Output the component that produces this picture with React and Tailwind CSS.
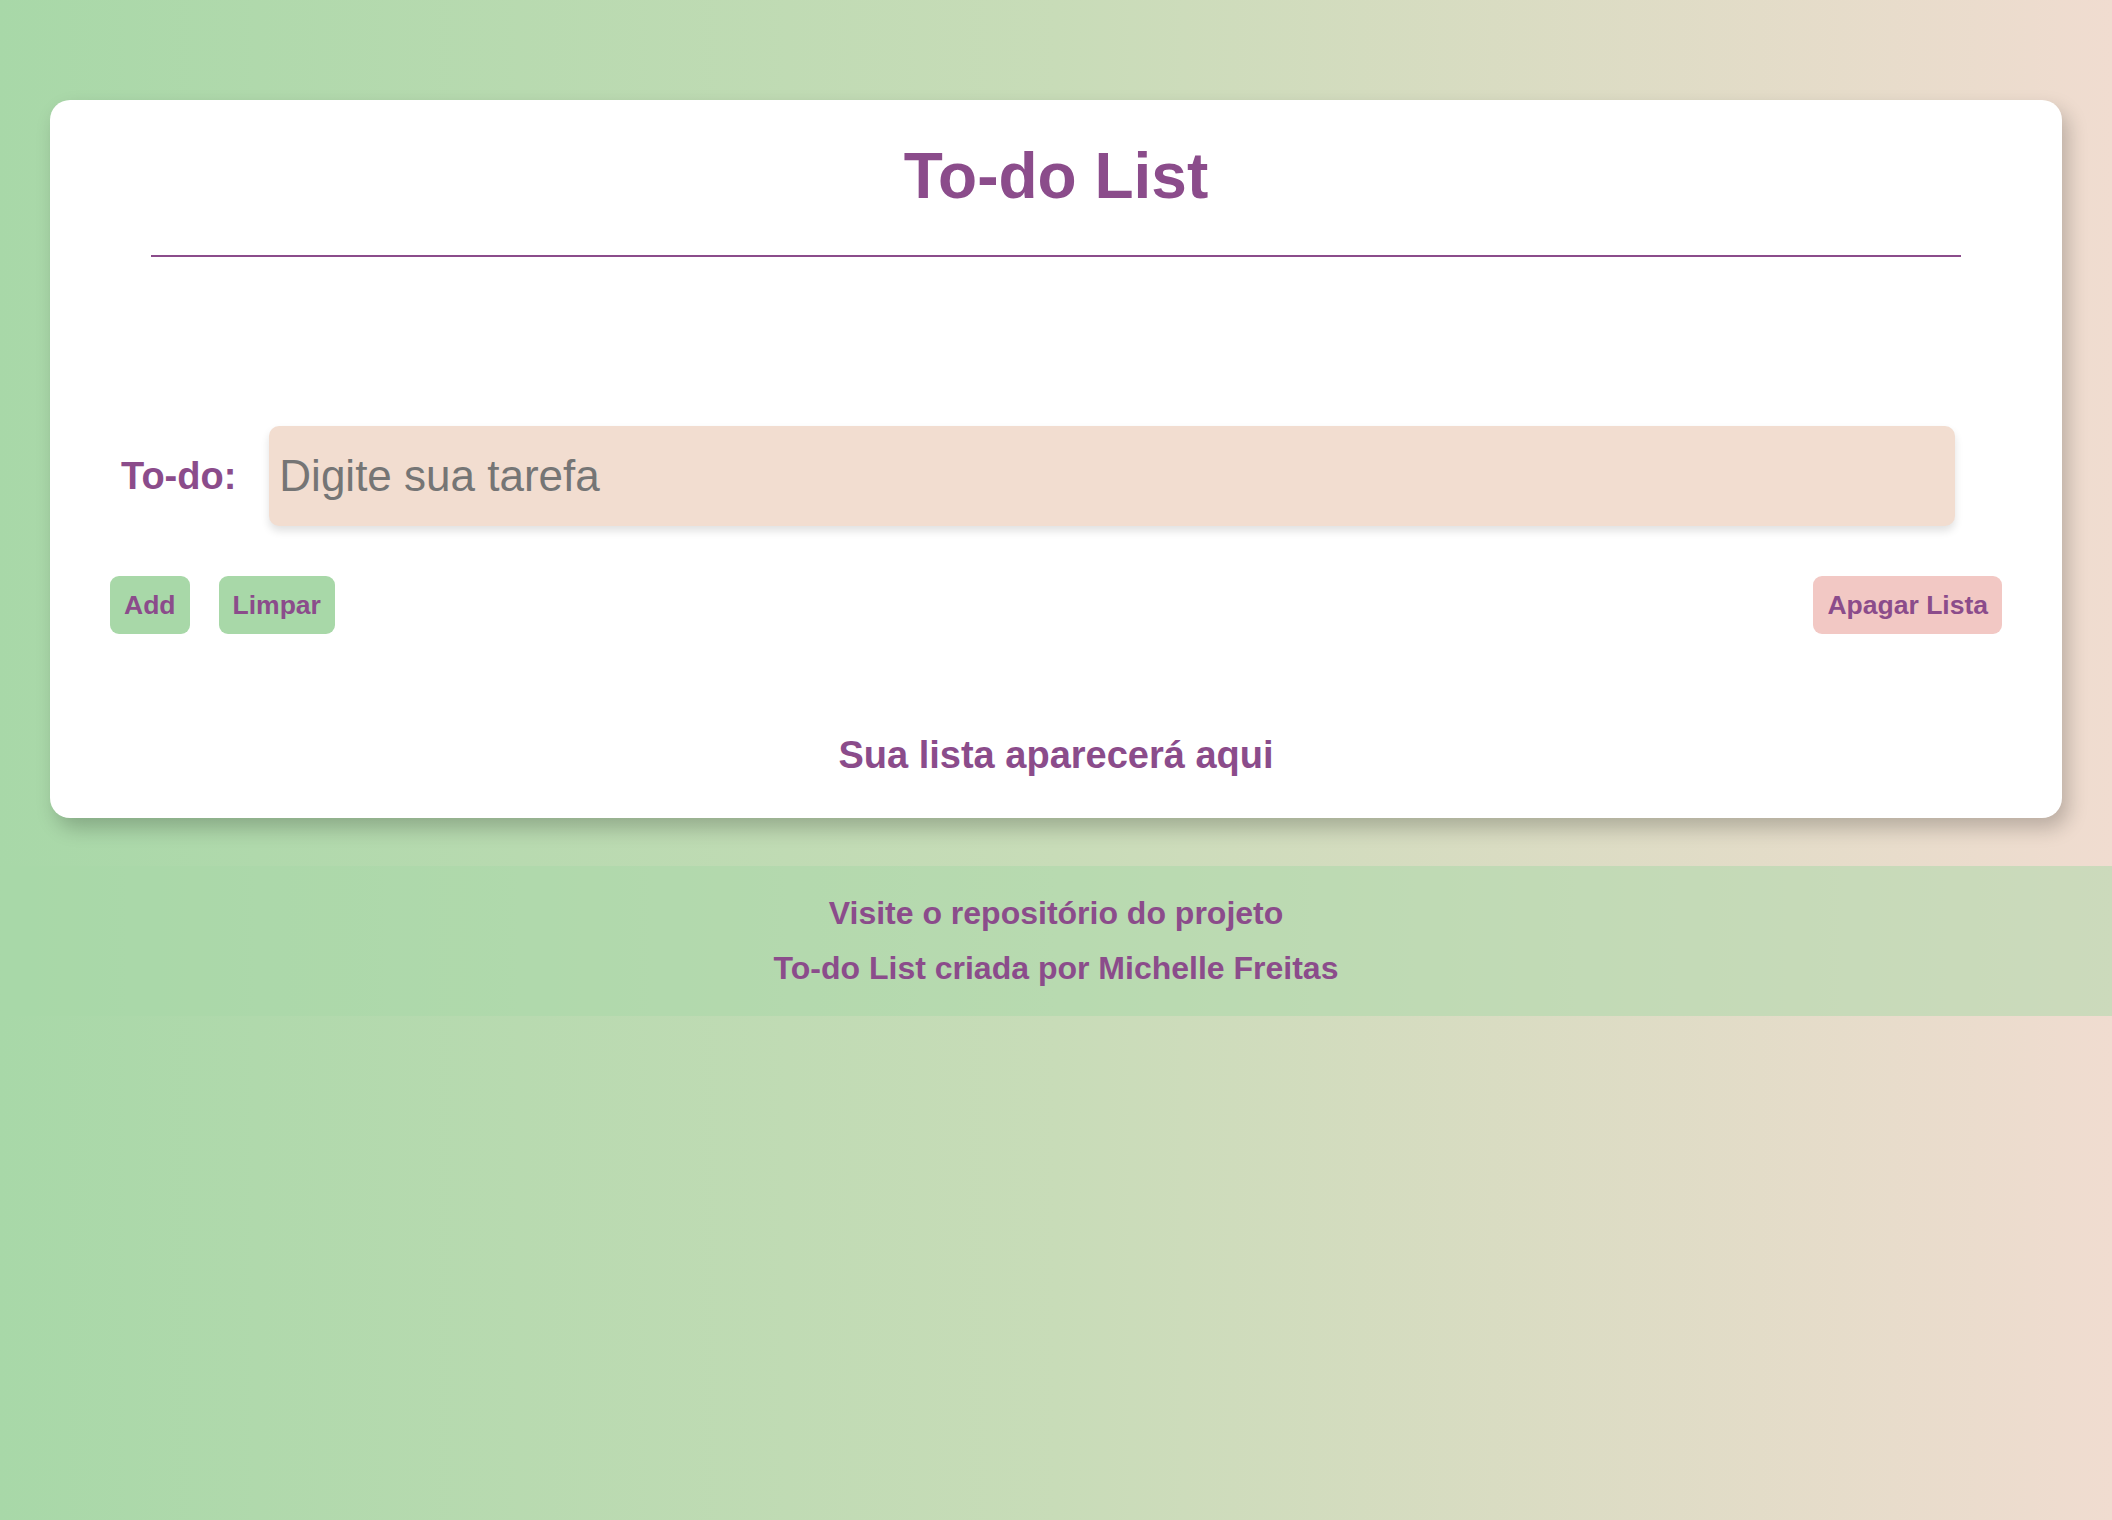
import React from "react";

export default function App() {
  const font = { fontFamily: '"Liberation Sans", Arial, sans-serif' };
  return (
    <div
      className="min-h-screen w-full bg-gradient-to-r from-[#a8d8a8] via-[#c8dcb8] to-[#f0dcd0] pt-[100px] leading-[normal]"
      style={font}
    >
      <div className="mx-[50px] rounded-[20px] bg-white pt-[40px] pb-[41px] shadow-[6px_10px_20px_rgba(0,0,0,0.22)]">
        <h1 className="text-center text-[64px] font-bold leading-[72px] text-[#8b4c8b]">
          To-do List
        </h1>
        <div className="mx-auto mt-[43px] h-[2px] w-[90%] bg-[#8b4c8b]" />

        <div className="mt-[169px] flex items-center pl-[71px] pr-[107px]">
          <label className="mr-[33px] text-[38px] font-bold text-[#8b4c8b]">To-do:</label>
          <input
            type="text"
            placeholder="Digite sua tarefa"
            className="h-[100px] flex-1 rounded-[10px] bg-[#f2ddd0] px-[10px] text-[44px] text-[#555] placeholder:text-[#757575] shadow-[0_5px_8px_rgba(0,0,0,0.12)] outline-none"
            style={font}
          />
        </div>

        <div className="mt-[50px] flex items-center justify-between px-[60px]">
          <div className="flex gap-[29px]">
            <button className="h-[58px] rounded-[9px] bg-[#a8d8a8] px-[14px] text-[26.5px] font-bold text-[#8b4c8b]" style={font}>
              Add
            </button>
            <button className="h-[58px] rounded-[9px] bg-[#a8d8a8] px-[14px] text-[26.5px] font-bold text-[#8b4c8b]" style={font}>
              Limpar
            </button>
          </div>
          <button className="h-[58px] rounded-[9px] bg-[#f2c8c4] px-[14px] text-[26.5px] font-bold text-[#8b4c8b]" style={font}>
            Apagar Lista
          </button>
        </div>

        <p className="mt-[99px] text-center text-[38px] font-bold leading-[44px] text-[#8b4c8b]">
          Sua lista aparecerá aqui
        </p>
      </div>

      <footer className="mt-[48px] flex flex-col items-center gap-[18px] bg-[#a8d8a8]/50 py-[29px] text-[32px] font-bold leading-[37px] text-[#8b4c8b]">
        <p>Visite o repositório do projeto</p>
        <p>To-do List criada por Michelle Freitas</p>
      </footer>
    </div>
  );
}
